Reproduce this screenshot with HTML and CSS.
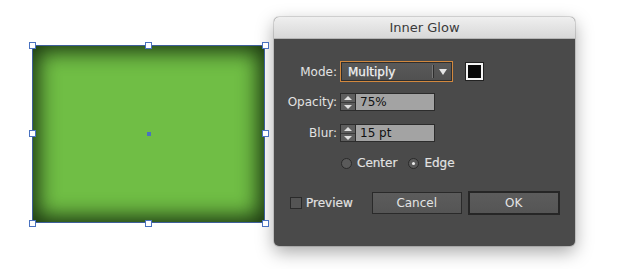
FILE: index.html
```html
<!DOCTYPE html>
<html lang="en">

<head>
    <meta charset="utf-8">
    <title>Inner Glow</title>
    <link rel="stylesheet" href="styles.css">
</head>

<body>
    <main class="canvas">
        <div class="artwork">
            <div class="art-rect"></div>
            <span class="handle h-tl"></span>
            <span class="handle h-tc"></span>
            <span class="handle h-tr"></span>
            <span class="handle h-ml"></span>
            <span class="handle h-mr"></span>
            <span class="handle h-bl"></span>
            <span class="handle h-bc"></span>
            <span class="handle h-br"></span>
            <span class="center-dot"></span>
        </div>

        <section class="dialog">
            <header class="dialog-title">Inner Glow</header>
            <div class="dialog-body">
                <div class="field-row row-mode">
                    <label class="field-label">Mode:</label>
                    <div class="select">
                        <span class="select-value">Multiply</span>
                        <span class="select-arrow"></span>
                    </div>
                    <span class="swatch"></span>
                </div>
                <div class="field-row row-opacity">
                    <label class="field-label">Opacity:</label>
                    <div class="spin-field">
                        <span class="spinner"><i class="up"></i><i class="down"></i></span>
                        <span class="spin-value">75%</span>
                    </div>
                </div>
                <div class="field-row row-blur">
                    <label class="field-label">Blur:</label>
                    <div class="spin-field">
                        <span class="spinner"><i class="up"></i><i class="down"></i></span>
                        <span class="spin-value">15 pt</span>
                    </div>
                </div>
                <div class="radio-row">
                    <span class="radio"></span><span class="radio-text">Center</span>
                    <span class="radio checked"></span><span class="radio-text">Edge</span>
                </div>
                <div class="button-row">
                    <span class="checkbox"></span>
                    <span class="check-text">Preview</span>
                    <button class="btn btn-cancel">Cancel</button>
                    <button class="btn btn-ok">OK</button>
                </div>
            </div>
        </section>
    </main>
</body>

</html>
```

FILE: styles.css
```css
*,
*::after,
*::before {
    margin: 0;
    padding: 0;
    box-sizing: border-box;
}

body {
    background-color: #fff;
    font-family: 'DejaVu Sans', 'Liberation Sans', sans-serif;
    font-size: 12px;
}

.canvas {
    display: flex;
    align-items: flex-start;
    width: 623px;
    height: 269px;
    overflow: hidden;
}

/* artwork on the artboard */
.artwork {
    position: relative;
    margin-left: 32px;
    margin-top: 45px;
    width: 233px;
    height: 178px;
}

.art-rect {
    width: 100%;
    height: 100%;
    background-color: #70be45;
    border: 1px solid #3e5f9a;
    box-shadow: inset 0 0 20px 6px #1c3811;
}

.handle {
    position: absolute;
    width: 7px;
    height: 7px;
    background-color: #fff;
    border: 1px solid #4a72c0;
}

.h-tl { left: -3px; top: -3px; }
.h-tc { left: 113px; top: -3px; }
.h-tr { right: -4px; top: -3px; }
.h-ml { left: -3px; top: 85px; }
.h-mr { right: -4px; top: 85px; }
.h-bl { left: -3px; bottom: -4px; }
.h-bc { left: 113px; bottom: -4px; }
.h-br { right: -4px; bottom: -4px; }

.center-dot {
    position: absolute;
    left: 115px;
    top: 87px;
    width: 4px;
    height: 4px;
    background-color: #4a72c0;
}

/* dialog */
.dialog {
    margin-left: 9px;
    margin-top: 17px;
    width: 301px;
    height: 229px;
    border-radius: 5px;
    overflow: hidden;
    background-color: #4a4a4a;
    box-shadow: 0 6px 18px rgba(0, 0, 0, .35), 0 0 0 1px rgba(0, 0, 0, .12);
}

.dialog-title {
    height: 22px;
    line-height: 22px;
    text-align: center;
    font-size: 13px;
    color: #3a3a3a;
    background: linear-gradient(#efefef, #d8d8d8);
    border-bottom: 1px solid #b5b5b5;
}

.dialog-body {
    display: flex;
    flex-direction: column;
    padding-top: 22px;
    color: #e2e2e2;
}

.field-row {
    display: flex;
    align-items: center;
}

.field-label {
    width: 63px;
    text-align: right;
    margin-right: 3px;
    font-size: 12px;
}

.row-opacity {
    margin-top: 11px;
}

.row-blur {
    margin-top: 13px;
}

.select {
    display: flex;
    align-items: center;
    width: 113px;
    height: 21px;
    border: 1px solid #d2883e;
    background: linear-gradient(#5a5a5a, #505050);
    box-shadow: inset 0 0 0 1px #2e2e2e;
}

.select-value {
    flex: 1;
    padding-left: 7px;
    color: #f2f2f2;
    font-size: 12px;
    -webkit-text-stroke: .25px #f2f2f2;
}

.select-arrow {
    position: relative;
    width: 19px;
    height: 13px;
    border-left: 1px solid #2e2e2e;
    box-shadow: -1px 0 0 #777;
}

.select-arrow::after {
    content: '';
    position: absolute;
    left: 5px;
    top: 4px;
    border-left: 4px solid transparent;
    border-right: 4px solid transparent;
    border-top: 6px solid #e6e6e6;
}

.swatch {
    width: 17px;
    height: 17px;
    margin-left: 13px;
    background-color: #080808;
    border: 2px solid #f4f4f4;
    box-shadow: 0 0 0 1px #222;
}

.spin-field {
    display: flex;
    width: 95px;
    height: 18px;
    border: 1px solid #2c2c2c;
}

.spinner {
    display: flex;
    flex-direction: column;
    width: 15px;
    background-color: #5e5e5e;
    border-right: 1px solid #2c2c2c;
}

.spinner i {
    flex: 1;
    position: relative;
}

.spinner .up {
    border-bottom: 1px solid #3a3a3a;
}

.spinner .up::after,
.spinner .down::after {
    content: '';
    position: absolute;
    left: 3px;
    border-left: 4px solid transparent;
    border-right: 4px solid transparent;
}

.spinner .up::after {
    top: 2px;
    border-bottom: 4px solid #e0e0e0;
}

.spinner .down::after {
    top: 2px;
    border-top: 4px solid #e0e0e0;
}

.spin-value {
    flex: 1;
    padding-left: 4px;
    line-height: 16px;
    background-color: #a3a3a3;
    color: #111;
    font-size: 12px;
}

.radio-row {
    display: flex;
    align-items: center;
    margin-top: 14px;
    padding-left: 67px;
    font-size: 12px;
}

.radio {
    width: 11px;
    height: 11px;
    border-radius: 50%;
    border: 1px solid #2a2a2a;
    background-color: #5a5a5a;
    margin-right: 5px;
    position: relative;
}

.radio.checked::after {
    content: '';
    position: absolute;
    left: 3px;
    top: 3px;
    width: 3px;
    height: 3px;
    border-radius: 50%;
    background-color: #eee;
}

.radio-text {
    margin-right: 11px;
    -webkit-text-stroke: .2px #e2e2e2;
}

.button-row {
    display: flex;
    align-items: center;
    margin-top: 21px;
    padding-left: 16px;
}

.checkbox {
    width: 12px;
    height: 12px;
    border: 1px solid #2a2a2a;
    background-color: #545454;
    margin-right: 4px;
}

.check-text {
    font-size: 12px;
    -webkit-text-stroke: .2px #e2e2e2;
    margin-right: 19px;
}

.btn {
    height: 22px;
    font-family: 'DejaVu Sans', 'Liberation Sans', sans-serif;
    font-size: 12px;
    color: #e4e4e4;
    background: linear-gradient(#5c5c5c, #555);
    border: 1px solid #2a2a2a;
}

.btn-cancel {
    width: 90px;
}

.btn-ok {
    width: 92px;
    height: 24px;
    margin-left: 6px;
    border: 2px solid #262626;
}
```
